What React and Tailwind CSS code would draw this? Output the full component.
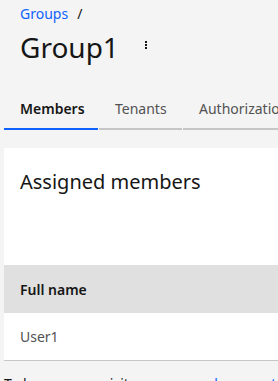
export default function App() {
  return (
    <div
      className="min-h-screen bg-[#f4f4f4] pl-1 text-[#161616] overflow-hidden"
      style={{ fontFamily: '"Noto Sans", "Liberation Sans", sans-serif' }}
    >
      <div className="px-4 pt-[3px]">
        <div className="flex items-center h-[20px] text-[14px]">
          <a className="text-[#0f62fe]">Groups</a>
          <span className="ml-[9px]">/</span>
        </div>
        <div className="flex items-center mt-[7px] h-[34px]">
          <h1 className="text-[28px] leading-[34px] font-normal">Group1</h1>
          <button className="ml-[24px] w-[6px] flex flex-col items-center gap-[1px] mt-[-4px]">
            <span className="w-[2px] h-[2px] bg-[#161616]" />
            <span className="w-[2px] h-[2px] bg-[#161616]" />
            <span className="w-[2px] h-[2px] bg-[#161616]" />
          </button>
        </div>
      </div>

      <div className="flex mt-[26px] whitespace-nowrap text-[14px]">
        <div className="shrink-0 w-[94px] h-[40px] pl-4 pt-[8px] border-b-2 border-[#0f62fe] font-semibold">
          Members
        </div>
        <div className="shrink-0 w-[83px] ml-[1px] h-[40px] pl-4 pt-[8px] border-b-2 border-[#c6c6c6] text-[#525252]">
          Tenants
        </div>
        <div className="shrink-0 w-[120px] ml-[1px] h-[40px] pl-4 pt-[8px] border-b-2 border-[#c6c6c6] text-[#525252]">
          Authorizations
        </div>
      </div>

      <div className="mt-[18px] bg-white w-[300px]">
        <div className="px-4 pt-[20px] pb-[69px] text-[20px] leading-[28px]">Assigned members</div>
        <div className="bg-[#e0e0e0] h-[48px] flex items-center px-4 text-[14px] font-semibold">
          Full name
        </div>
        <div className="h-[48px] flex items-center px-4 text-[14px] text-[#525252] border-b border-[#c6c6c6]">
          User1
        </div>
      </div>

      <div className="mt-[12px] text-[14px] whitespace-nowrap">
        To learn more, visit our <a className="text-[#0f62fe] underline">groups documentation</a>.
      </div>
    </div>
  )
}
